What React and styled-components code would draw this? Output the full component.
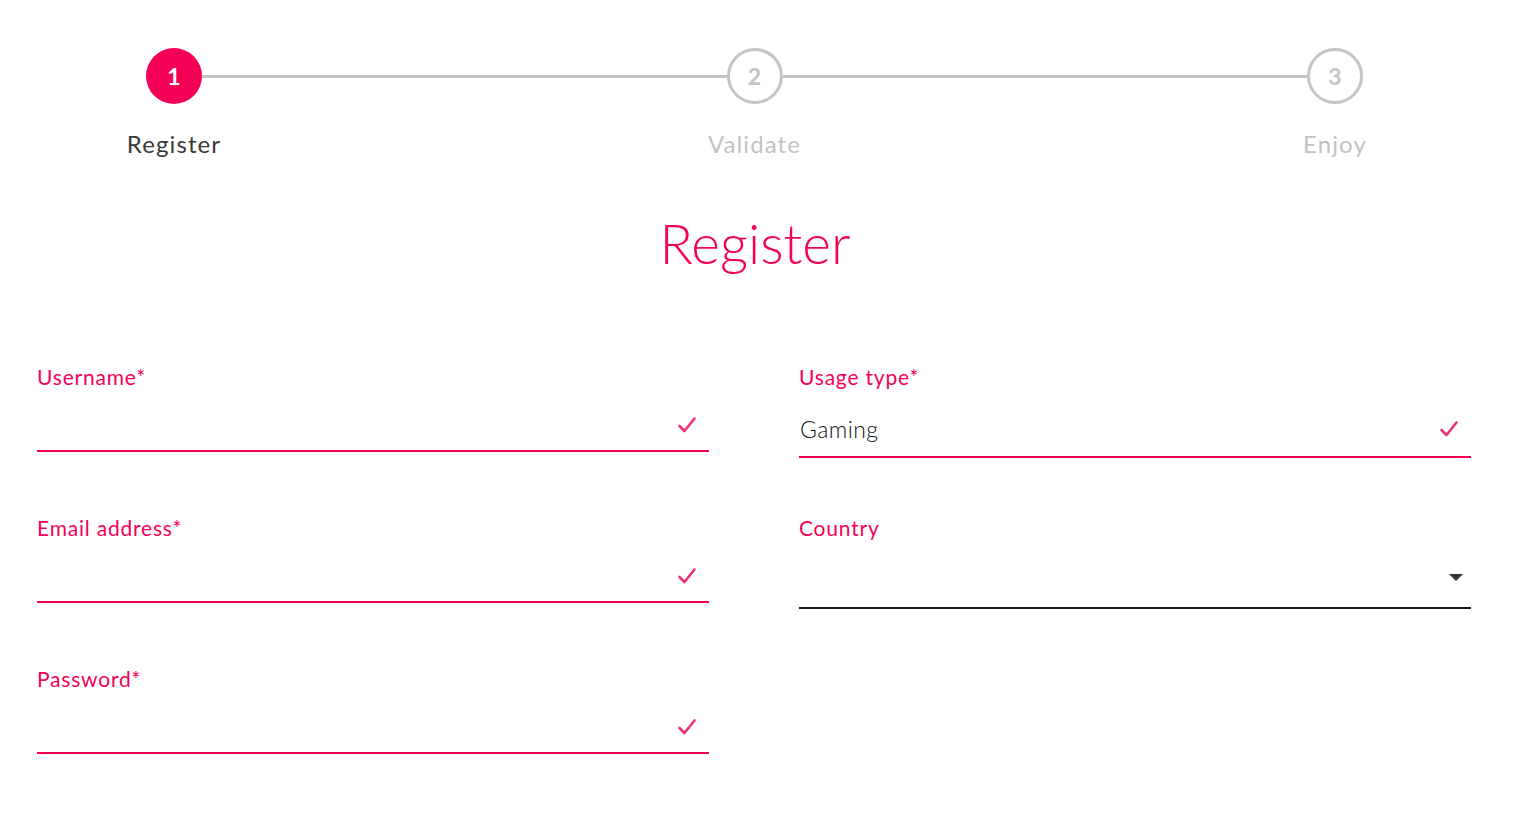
import React from 'react';
import styled, { createGlobalStyle } from 'styled-components';

const PINK = '#f50057';

const GlobalStyle = createGlobalStyle`
  html, body {
    margin: 0;
    padding: 0;
    background: #fff;
    font-family: Lato, "Open Sans", "Liberation Sans", sans-serif;
  }
`;

const Page = styled.div`
  width: 1528px;
  min-height: 828px;
  box-sizing: border-box;
`;

const Stepper = styled.div`
  display: flex;
  align-items: flex-start;
  padding: 48px 165px 0 146px;
`;

const Step = styled.div`
  width: 56px;
  display: flex;
  flex-direction: column;
  align-items: center;
`;

const Circle = styled.div`
  width: 56px;
  height: 56px;
  box-sizing: border-box;
  border-radius: 50%;
  display: flex;
  align-items: center;
  justify-content: center;
  font-size: 23px;
  font-weight: 700;
  background: ${p => (p.$active ? PINK : '#fff')};
  color: ${p => (p.$active ? '#fff' : '#c4c4c4')};
  border: ${p => (p.$active ? 'none' : '3px solid #c4c4c4')};
`;

const StepLabel = styled.div`
  margin-top: 25px;
  white-space: nowrap;
  font-size: 24px;
  line-height: 30px;
  letter-spacing: 1.1px;
  color: ${p => (p.$active ? '#3a3a3a' : '#c2c2c2')};
`;

const Connector = styled.div`
  flex: 1;
  height: 3px;
  margin-top: 27px;
  background: #c4c4c4;
`;

const Title = styled.h1`
  margin: 51px 0 0;
  padding-right: 18px;
  text-align: center;
  font-weight: 300;
  font-size: 55px;
  line-height: 66px;
  color: ${PINK};
`;

const Form = styled.div`
  display: grid;
  grid-template-columns: 672px 672px;
  column-gap: 90px;
  padding: 89px 0 0 37px;
`;

const Column = styled.div`
  display: flex;
  flex-direction: column;
`;

const Field = styled.div`
  height: 151px;
  display: flex;
  flex-direction: column;
`;

const Label = styled.label`
  font-size: 21px;
  line-height: 24px;
  letter-spacing: 0.8px;
  color: ${PINK};
`;

const InputRow = styled.div`
  height: ${p => p.$h}px;
  display: flex;
  align-items: flex-end;
  justify-content: space-between;
  padding: 0 ${p => p.$pr}px ${p => p.$pb}px 1px;
  box-sizing: border-box;
  border-bottom: 2px solid ${p => (p.$dark ? '#1b1b1b' : PINK)};
`;

const Value = styled.span`
  font-size: 23px;
  font-weight: 300;
  line-height: 28px;
  color: #111;
  letter-spacing: 0.4px;
`;

const CheckSvg = styled.svg`
  margin-left: auto;
  margin-bottom: ${p => p.$lift || 0}px;
`;

const CheckIcon = ({ lift }) => (
  <CheckSvg $lift={lift} width="20" height="20" viewBox="0 0 20 20">
    <path d="M2.5 11 L7.5 16 L17.5 3.5" fill="none" stroke="#f0326e" strokeWidth="2.6" strokeLinecap="round" strokeLinejoin="round" />
  </CheckSvg>
);

const Arrow = styled.span`
  margin-left: auto;
  width: 0;
  height: 0;
  border-left: 7px solid transparent;
  border-right: 7px solid transparent;
  border-top: 7px solid #333;
`;

const steps = ['Register', 'Validate', 'Enjoy'];

export default function App() {
  return (
    <Page>
      <GlobalStyle />
      <Stepper>
        {steps.map((s, i) => (
          <React.Fragment key={s}>
            {i > 0 && <Connector />}
            <Step>
              <Circle $active={i === 0}>{i + 1}</Circle>
              <StepLabel $active={i === 0}>{s}</StepLabel>
            </Step>
          </React.Fragment>
        ))}
      </Stepper>

      <Title>Register</Title>

      <Form>
        <Column>
          <Field>
            <Label>Username*</Label>
            <InputRow $h={63} $pb={15} $pr={12}><CheckIcon /></InputRow>
          </Field>
          <Field>
            <Label>Email address*</Label>
            <InputRow $h={63} $pb={15} $pr={12}><CheckIcon /></InputRow>
          </Field>
          <Field>
            <Label>Password*</Label>
            <InputRow $h={63} $pb={15} $pr={12}><CheckIcon /></InputRow>
          </Field>
        </Column>
        <Column>
          <Field>
            <Label>Usage type*</Label>
            <InputRow $h={69} $pb={13} $pr={12}>
              <Value>Gaming</Value>
              <CheckIcon lift={4} />
            </InputRow>
          </Field>
          <Field>
            <Label>Country</Label>
            <InputRow $h={69} $pb={26} $pr={8} $dark><Arrow /></InputRow>
          </Field>
        </Column>
      </Form>
    </Page>
  );
}
